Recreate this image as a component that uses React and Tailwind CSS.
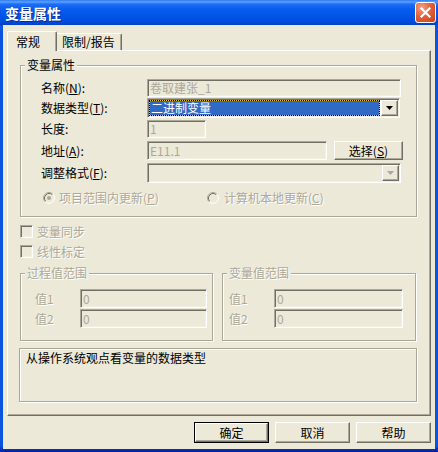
import React from 'react';

// classic XP look: sunken fields, raised buttons, etched group boxes
const sunken =
  'border border-t-[#aca899] border-l-[#aca899] border-b-white border-r-white shadow-[inset_1px_1px_0_#716f64,inset_-1px_-1px_0_#f1efe2]';
const raised =
  'border border-t-white border-l-white border-r-[#716f64] border-b-[#716f64] shadow-[inset_-1px_-1px_0_#aca899] bg-[#ece9d8]';
const etched = 'border border-[#aca899] shadow-[inset_1px_1px_0_#fff,1px_1px_0_#fff]';
const dim = 'text-[#aca899] [text-shadow:1px_1px_0_#fff]';

const Group = ({ label, disabled, className = '', children }) => (
  <div className={`relative ${etched} ${className}`}>
    <span className={`absolute left-[4px] -top-[7px] px-[2px] bg-[#ece9d8] ${disabled ? dim : ''}`}>{label}</span>
    {children}
  </div>
);

const Field = ({ value, className = '' }) => (
  <div className={`${sunken} flex items-center pl-[2px] text-[#aca899] ${className}`}>{value}</div>
);

const Arrow = ({ color }) => (
  <div className={`${raised} w-[17px] h-full flex items-center justify-center`}>
    <svg width="7" height="4" viewBox="0 0 7 4">
      <path d="M0 0H7L3.5 4Z" fill={color} />
    </svg>
  </div>
);

const Radio = ({ checked }) => (
  <svg width="12" height="12" viewBox="0 0 12 12" className="shrink-0">
    <circle cx="6" cy="6" r="5" fill="#ece9d8" />
    <path d="M2.11 9.89A5.5 5.5 0 0 1 9.89 2.11" stroke="#aca899" fill="none" />
    <path d="M9.89 2.11A5.5 5.5 0 0 1 2.11 9.89" stroke="#fff" fill="none" />
    <path d="M2.82 9.18A4.5 4.5 0 0 1 9.18 2.82" stroke="#716f64" fill="none" />
    <path d="M9.18 2.82A4.5 4.5 0 0 1 2.82 9.18" stroke="#f1efe2" fill="none" />
    {checked && <circle cx="6" cy="6" r="2" fill="#aca899" />}
  </svg>
);

const Check = ({ label, className = '' }) => (
  <div className={`flex items-center h-[13px] ${className}`}>
    <div className={`${sunken} w-[13px] h-[13px] bg-[#ece9d8]`} />
    <span className={`ml-[4px] ${dim}`}>{label}</span>
  </div>
);

const Btn = ({ children, isDefault }) =>
  isDefault ? (
    <div className="w-[75px] h-full border border-black flex">
      <div className={`${raised} flex-1 flex items-center justify-center`}>{children}</div>
    </div>
  ) : (
    <div className={`${raised} w-[75px] h-full flex items-center justify-center`}>{children}</div>
  );

const ValueRow = ({ label, w, className = '' }) => (
  <div className={`flex items-center h-[19px] ${className}`}>
    <span className={`w-[45px] ${dim}`}>{label}</span>
    <Field value="0" className={`${w} h-full`} />
  </div>
);

export default function App() {
  return (
    <div className="w-[438px] h-[452px] flex flex-col bg-[linear-gradient(to_bottom,#0a54e0_0px,#0a54e0_446px,#0836c8_449px,#001d9e_452px)] font-['Noto_Sans_CJK_SC',sans-serif] text-[12px] leading-none text-black select-none">
      {/* Title bar */}
      <div className="h-[25px] shrink-0 flex items-center justify-between pl-[5px] pr-[2px] bg-[linear-gradient(to_bottom,#2f7cf5_0%,#5aa2ff_8%,#1f6ef5_16%,#0a5cef_35%,#0055e6_65%,#004bdb_88%,#0040c8_100%)]">
        <span className="text-white font-bold text-[14px] [text-shadow:1px_1px_0_#0b2a8a]">变量属性</span>
        <div className="w-[21px] h-[21px] rounded-[3px] border border-white bg-[radial-gradient(circle_at_30%_25%,#f4a285_0%,#e4603a_45%,#c8421a_100%)] flex items-center justify-center">
          <svg width="11" height="11" viewBox="0 0 11 11">
            <path d="M1.5 1.5L9.5 9.5M9.5 1.5L1.5 9.5" stroke="#fff" strokeWidth="2.2" strokeLinecap="square" />
          </svg>
        </div>
      </div>

      {/* Window body */}
      <div className="flex-1 flex flex-col mx-[3px] mb-[3px] bg-[#ece9d8] px-[4px]">
        {/* Tabs */}
        <div className="h-[25px] shrink-0 flex items-end">
          <div className="relative z-10 -mb-px h-[20px] w-[50px] flex items-center pl-[8px] bg-[#ece9d8] border-t border-l border-white border-r border-r-[#716f64] shadow-[inset_-1px_0_0_#aca899] rounded-t-[2px]">
            常规
          </div>
          <div className="h-[17px] w-[65px] flex items-center pl-[5px] border-t border-t-white border-r border-r-[#716f64] shadow-[inset_-1px_0_0_#aca899] rounded-tr-[2px]">
            限制/报告
          </div>
        </div>

        {/* Tab panel */}
        <div className="h-[366px] shrink-0 flex flex-col px-[12px] border border-t-white border-l-white border-r-[#716f64] border-b-[#716f64] shadow-[inset_-1px_-1px_0_#aca899]">
          <Group label="变量属性" className="mt-[14px] w-[397px] h-[152px] flex flex-col pt-[13px] pl-[20px]">
            <div className="flex items-center h-[18px]">
              <span className="w-[106px]">名称(<u>N</u>):</span>
              <Field value="卷取建张_1" className="w-[254px] h-full" />
            </div>
            <div className="flex items-center h-[20px] mt-[1px]">
              <span className="w-[106px]">数据类型(<u>T</u>):</span>
              <div className={`${sunken} w-[253px] h-full flex p-[1px] gap-[1px] bg-white`}>
                <div className="flex-1 flex border border-dotted border-black bg-[#e8c23a] bg-clip-border">
                  <div className="flex-1 bg-[#316ac5] flex items-center pl-[1px] text-white">二进制变量</div>
                </div>
                <Arrow color="#000" />
              </div>
            </div>
            <div className="flex items-center h-[18px] mt-[2px]">
              <span className="w-[106px]">长度:</span>
              <Field value="1" className="w-[59px] h-full" />
            </div>
            <div className="flex items-center h-[19px] mt-[3px]">
              <span className="w-[106px]">地址(<u>A</u>):</span>
              <Field value="E11.1" className="w-[180px] h-full" />
              <div className={`${raised} ml-[7px] w-[69px] h-full flex items-center justify-center`}>
                选择(<u>S</u>)
              </div>
            </div>
            <div className="flex items-center h-[20px] mt-[3px]">
              <span className="w-[106px]">调整格式(<u>F</u>):</span>
              <div className={`${sunken} w-[254px] h-full flex justify-end p-[1px]`}>
                <Arrow color="#aca899" />
              </div>
            </div>
            <div className="flex items-center h-[13px] mt-[8px]">
              <div className="w-[166px] flex items-center pl-[2px]">
                <Radio checked />
                <span className={`ml-[4px] ${dim}`}>项目范围内更新(<u>P</u>)</span>
              </div>
              <div className="flex items-center">
                <Radio />
                <span className={`ml-[5px] ${dim}`}>计算机本地更新(<u>C</u>)</span>
              </div>
            </div>
          </Group>

          <Check label="变量同步" className="mt-[8px]" />
          <Check label="线性标定" className="mt-[7px]" />

          <div className="mt-[15px] h-[68px] flex gap-[9px]">
            <Group label="过程值范围" disabled className="w-[193px] h-full pt-[15px] pl-[14px]">
              <ValueRow label="值1" w="w-[127px]" />
              <ValueRow label="值2" w="w-[127px]" className="mt-[1px]" />
            </Group>
            <Group label="变量值范围" disabled className="w-[194px] h-full pt-[15px] pl-[6px]">
              <ValueRow label="值1" w="w-[129px]" />
              <ValueRow label="值2" w="w-[129px]" className="mt-[1px]" />
            </Group>
          </div>

          <div className={`${etched} mt-[7px] -ml-px w-[398px] h-[54px] pl-[6px] pt-[3px]`}>
            从操作系统观点看变量的数据类型
          </div>
        </div>

        {/* Dialog buttons */}
        <div className="mt-[6px] h-[21px] flex justify-end gap-[6px]">
          <Btn isDefault>确定</Btn>
          <Btn>取消</Btn>
          <Btn>帮助</Btn>
        </div>
      </div>
    </div>
  );
}
